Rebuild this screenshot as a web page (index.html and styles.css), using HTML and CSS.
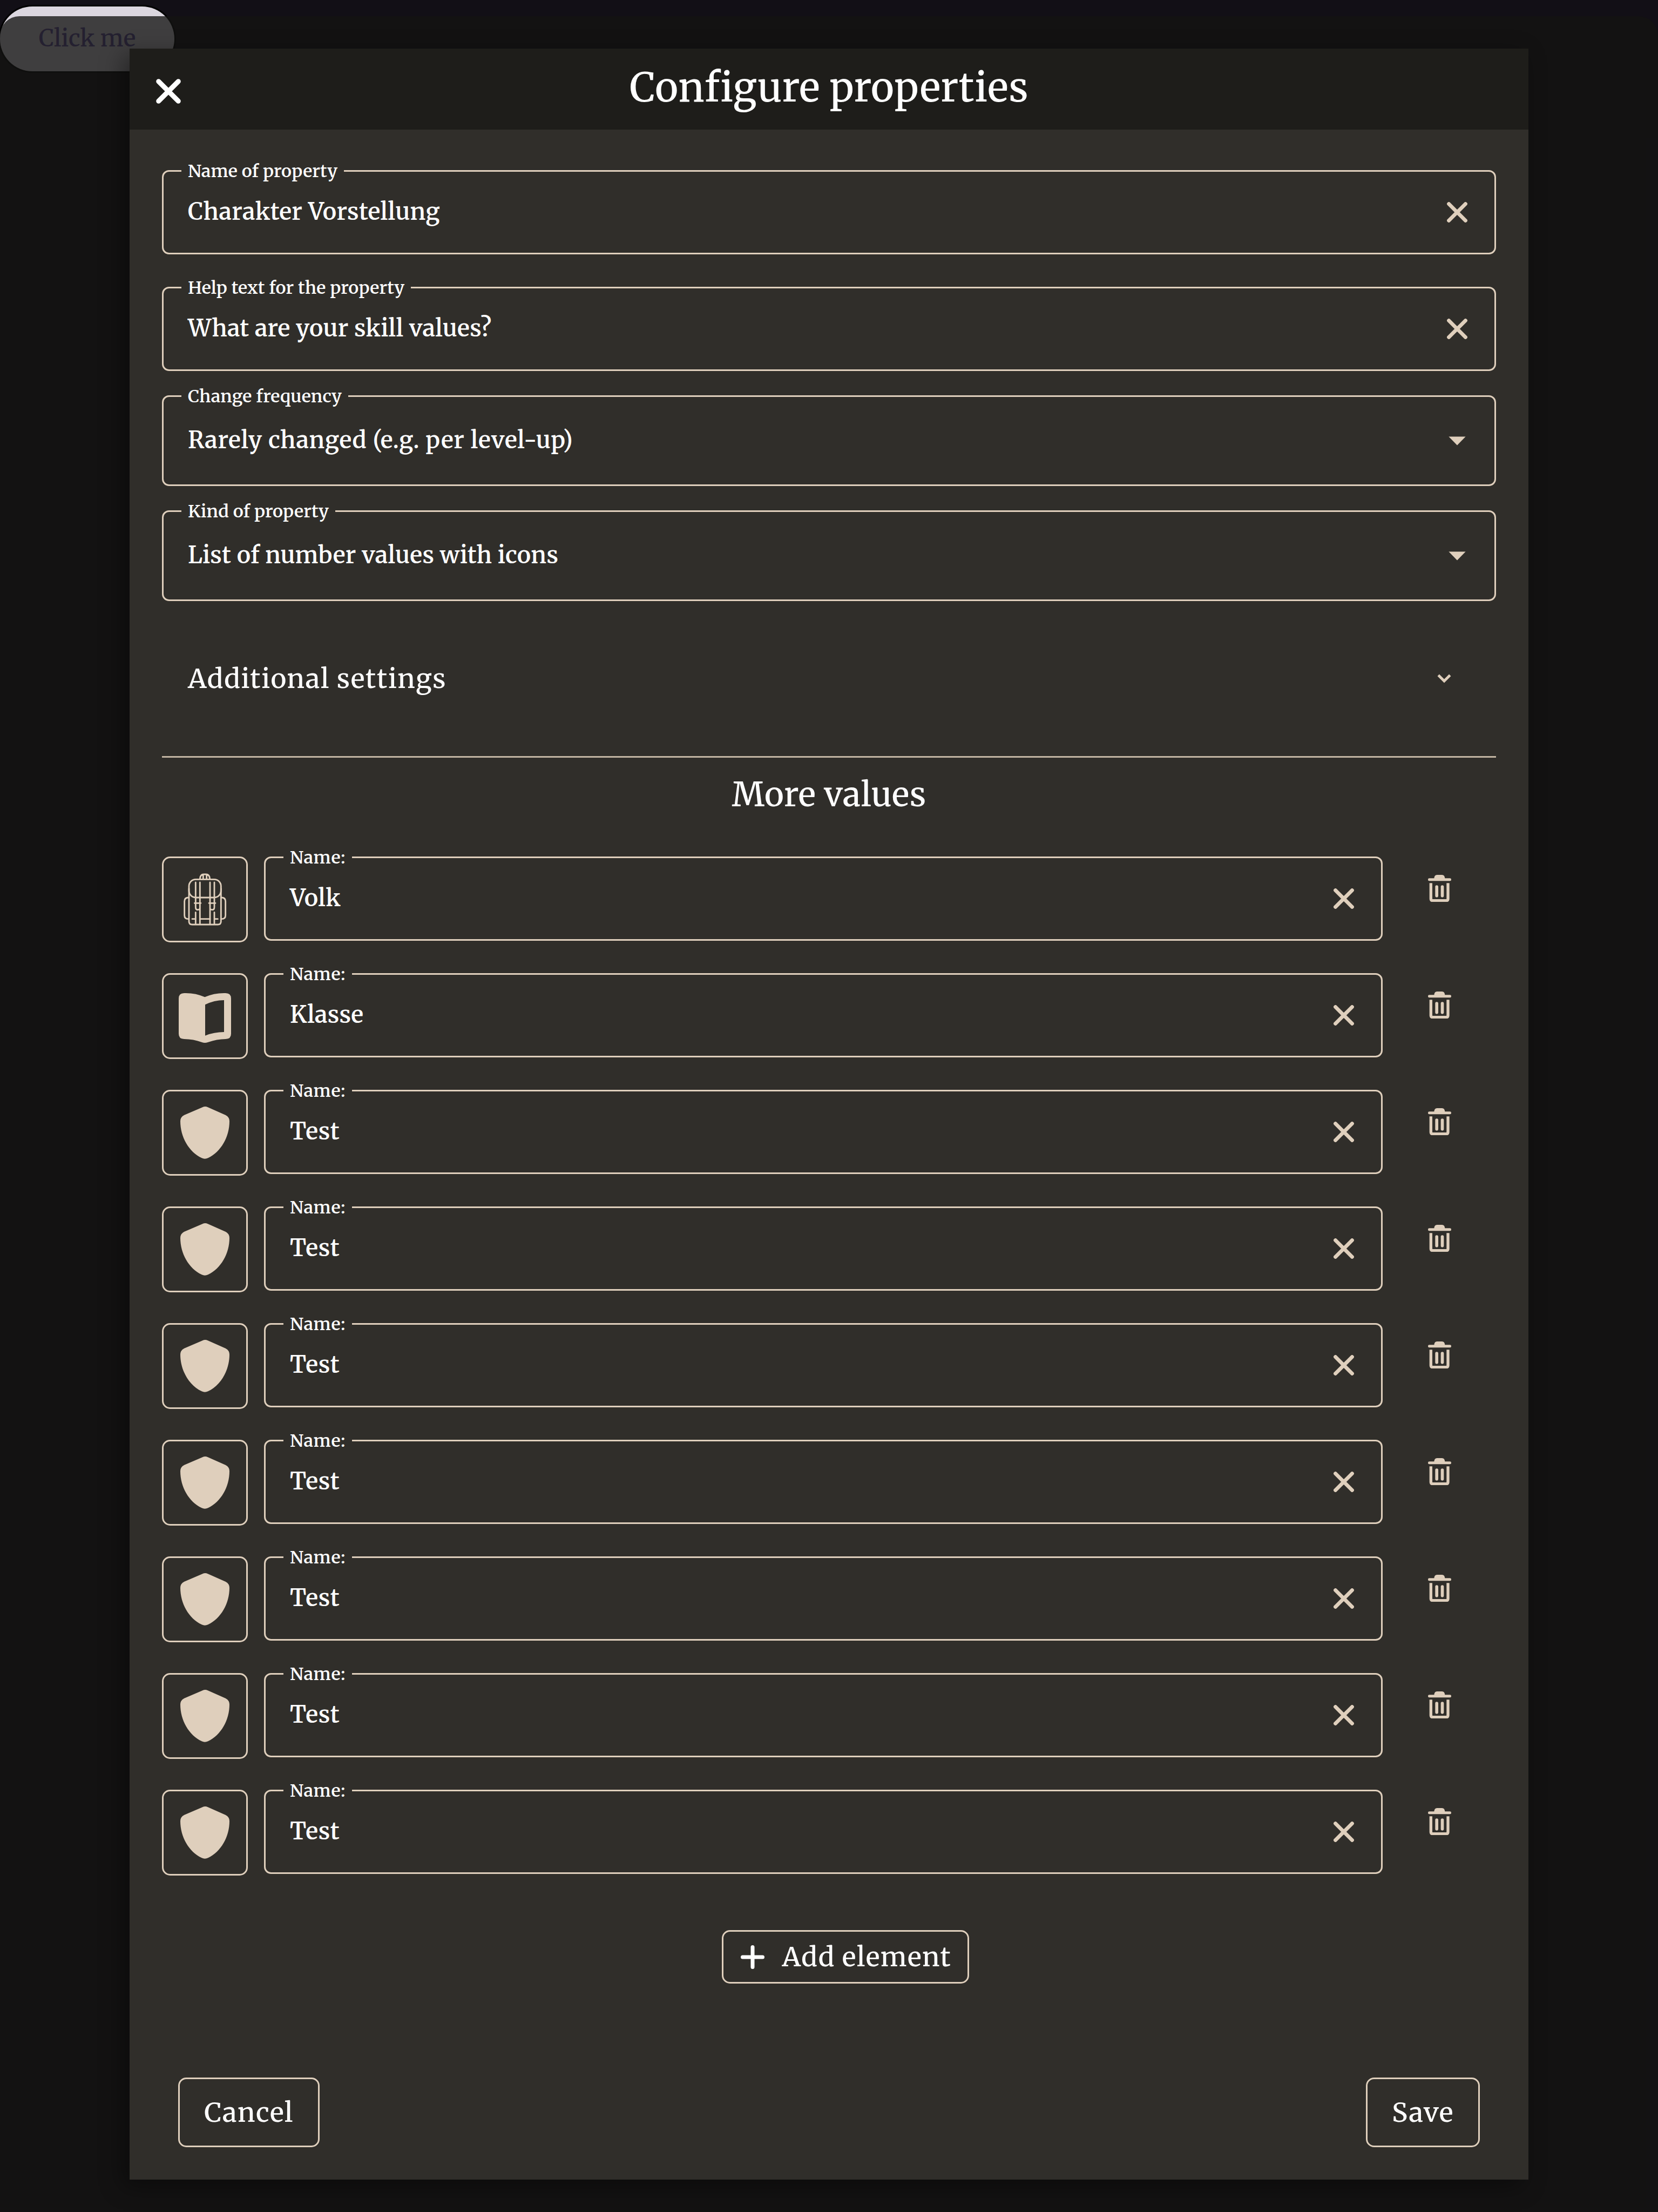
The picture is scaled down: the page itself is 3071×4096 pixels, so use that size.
FILE: index.html
```html
<!DOCTYPE html>
<html lang="en">
<head>
<meta charset="utf-8">
<title>Configure properties</title>
<link rel="stylesheet" href="styles.css">
</head>
<body>
<svg class="defs" aria-hidden="true">
  <symbol id="clear" viewBox="0 0 38 38">
    <path d="M3.6 3.6 34.4 34.4M34.4 3.6 3.6 34.4" fill="none" stroke="currentColor" stroke-width="7" stroke-linecap="round"/>
  </symbol>
  <symbol id="caret" viewBox="0 0 38 38">
    <path d="M3.4 11.5H34.6L19 27.5Z" fill="currentColor"/>
  </symbol>
  <symbol id="trash" viewBox="0 0 129 151">
    <path fill="currentColor" d="M34 19Q36 0 50 0H78Q92 0 94 19H121.500A7.500 7.500 0 0 1 121.500 34H7.500A7.500 7.500 0 0 1 7.500 19Z"/>
    <path fill="none" stroke="currentColor" stroke-width="16" d="M16 46V133Q16 143 26 143H102Q111 143 111 133V46"/>
    <path fill="none" stroke="currentColor" stroke-width="17" stroke-linecap="round" d="M48.500 66.500V116M79.500 66.500V116"/>
  </symbol>
  <symbol id="shield" viewBox="39 126 459 459">
    <path fill="currentColor" d="M252 215Q268 206 285 214L383 257Q405 268 405 292C405 378 358 462 286 496Q268 504 251 496C179 462 132 378 132 292Q132 268 154 257Z"/>
  </symbol>
  <symbol id="book" viewBox="39 738 459 459">
    <path fill="currentColor" fill-rule="evenodd" d="M153 840Q215 838 268 862Q322 838 384 840Q414 840 414 870V1066Q414 1095 384 1095Q335 1095 285 1113Q268 1119 252 1113Q205 1095 153 1095Q123 1095 123 1066V870Q123 840 153 840ZM270 904Q320 879 375 879V1056Q320 1056 270 1076Z"/>
  </symbol>
  <symbol id="backpack" viewBox="39 90 459 459">
    <g fill="none" stroke="currentColor" stroke-width="8.500" stroke-linecap="round">
      <path d="M241 205Q243 180 262 180H275Q294 180 296 205M259 183V205M278 183V205"/>
      <rect x="180" y="208" width="178" height="101" rx="38"/>
      <path d="M180 260V441Q180 459 198 459H340Q358 459 358 441V260"/>
      <path d="M178 309Q155 309 155 330V408Q155 428 176 428M360 309Q383 309 383 330V408Q383 428 362 428"/>
      <path d="M217 225V362Q217 377 229 377Q237 377 241 370M241 225V457M297 225V457M321 225V362Q321 377 309 377Q301 377 297 370"/>
      <path d="M211 340H246M291 340H327M217 391V457M321 391V457M198 428H217M241 428H297M321 428H340"/>
    </g>
  </symbol>
</svg>

<button class="launch">Click me</button>

<div class="scrim">
  <section class="dialog">
    <header class="bar">
      <svg class="close" viewBox="0 0 46 46"><path d="M4.700 4.700 41.300 41.300M41.300 4.700 4.700 41.300" fill="none" stroke="currentColor" stroke-width="9" stroke-linecap="round"/></svg>
      <h1 class="title">Configure properties</h1>
    </header>

    <div class="content">
      <fieldset class="field"><legend>Name of property</legend><span class="value spaced">Charakter Vorstellung</span><svg class="icon"><use href="#clear"/></svg></fieldset>
      <fieldset class="field second"><legend>Help text for the property</legend><span class="value">What are your skill values?</span><svg class="icon"><use href="#clear"/></svg></fieldset>
      <fieldset class="field select"><legend>Change frequency</legend><span class="value wide">Rarely changed (e.g. per level-up)</span><svg class="icon"><use href="#caret"/></svg></fieldset>
      <fieldset class="field select"><legend>Kind of property</legend><span class="value">List of number values with icons</span><svg class="icon"><use href="#caret"/></svg></fieldset>

      <div class="expander">
        <span>Additional settings</span>
        <svg class="chevron" viewBox="0 0 26 17"><path d="M2.200 2.200 13 13 23.800 2.200" fill="none" stroke="currentColor" stroke-width="4.800"/></svg>
      </div>

      <h2 class="subtitle">More values</h2>

      <ul class="rows">
        <li class="row"><span class="pick"><svg><use href="#backpack"/></svg></span><fieldset class="field"><legend>Name:</legend><span class="value spaced">Volk</span><svg class="icon"><use href="#clear"/></svg></fieldset><svg class="delete"><use href="#trash"/></svg></li>
        <li class="row"><span class="pick"><svg><use href="#book"/></svg></span><fieldset class="field"><legend>Name:</legend><span class="value">Klasse</span><svg class="icon"><use href="#clear"/></svg></fieldset><svg class="delete"><use href="#trash"/></svg></li>
        <li class="row"><span class="pick"><svg><use href="#shield"/></svg></span><fieldset class="field"><legend>Name:</legend><span class="value spaced">Test</span><svg class="icon"><use href="#clear"/></svg></fieldset><svg class="delete"><use href="#trash"/></svg></li>
        <li class="row"><span class="pick"><svg><use href="#shield"/></svg></span><fieldset class="field"><legend>Name:</legend><span class="value spaced">Test</span><svg class="icon"><use href="#clear"/></svg></fieldset><svg class="delete"><use href="#trash"/></svg></li>
        <li class="row"><span class="pick"><svg><use href="#shield"/></svg></span><fieldset class="field"><legend>Name:</legend><span class="value spaced">Test</span><svg class="icon"><use href="#clear"/></svg></fieldset><svg class="delete"><use href="#trash"/></svg></li>
        <li class="row"><span class="pick"><svg><use href="#shield"/></svg></span><fieldset class="field"><legend>Name:</legend><span class="value spaced">Test</span><svg class="icon"><use href="#clear"/></svg></fieldset><svg class="delete"><use href="#trash"/></svg></li>
        <li class="row"><span class="pick"><svg><use href="#shield"/></svg></span><fieldset class="field"><legend>Name:</legend><span class="value spaced">Test</span><svg class="icon"><use href="#clear"/></svg></fieldset><svg class="delete"><use href="#trash"/></svg></li>
        <li class="row"><span class="pick"><svg><use href="#shield"/></svg></span><fieldset class="field"><legend>Name:</legend><span class="value spaced">Test</span><svg class="icon"><use href="#clear"/></svg></fieldset><svg class="delete"><use href="#trash"/></svg></li>
        <li class="row"><span class="pick"><svg><use href="#shield"/></svg></span><fieldset class="field"><legend>Name:</legend><span class="value spaced">Test</span><svg class="icon"><use href="#clear"/></svg></fieldset><svg class="delete"><use href="#trash"/></svg></li>
      </ul>

      <div class="add-line">
        <button class="button add"><svg class="plus" viewBox="0 0 44 44"><path d="M3.500 22H40.500M22 3.500V40.500" fill="none" stroke="currentColor" stroke-width="7" stroke-linecap="round"/></svg>Add element</button>
      </div>
    </div>

    <footer class="actions">
      <button class="button cancel">Cancel</button>
      <button class="button save">Save</button>
    </footer>
  </section>
</div>
</body>
</html>
```
FILE: styles.css
```css
:root {
  --line: #dfcfbc;
  --surface: #302e2a;
}

* { box-sizing: border-box; }

body {
  position: relative;
  margin: 0;
  padding-top: 12px;
  width: 3071px;
  height: 4096px;
  overflow: hidden;
  background: #120f16;
  color: #fff;
  font-family: Merriweather, "DejaVu Serif", serif;
  font-size: 43px;
  font-weight: 500;
  line-height: 1.25;
}

.defs { position: absolute; width: 0; height: 0; }

button { font: inherit; color: inherit; cursor: pointer; }

.launch {
  display: block;
  width: 323px;
  height: 120px;
  padding: 0;
  border: 0;
  border-radius: 60px;
  background: #dbd6df;
  box-shadow: 0 0 0 3px #000;
  color: #604f9a;
}

.scrim {
  position: absolute;
  inset: 30px 0 0 0;
  padding: 60px 240px 0;
  border-radius: 36px 36px 0 0;
  background: rgba(19, 19, 18, .78);
}

.dialog {
  display: flex;
  flex-direction: column;
  height: 3946px;
  background: var(--surface);
  box-shadow: -12px 12px 40px rgba(0, 0, 0, .4);
}

.bar {
  display: grid;
  grid-template-columns: 150px 1fr 150px;
  align-items: center;
  height: 150px;
  background: #1e1d1a;
}

.close { width: 46px; height: 46px; margin: 8px 0 0 49px; }

.title {
  margin: 0 0 4px;
  font-size: 73px;
  font-weight: 500;
  letter-spacing: .4px;
  text-align: center;
}

.content { padding: 75px 60px 0; }

.field {
  display: flex;
  align-items: center;
  justify-content: space-between;
  height: 156px;
  min-width: 0;
  margin: 0;
  padding: 0 50px 0 45px;
  border: 3px solid var(--line);
  border-radius: 13px;
}

.field legend {
  height: 3px;
  margin-left: -12px;
  padding: 0 12px;
  font-size: 32.2px;
  font-weight: 560;
  line-height: 3px;
  letter-spacing: .15px;
  white-space: nowrap;
}

.second { margin-top: 60px; }
.select { height: 168px; margin-top: 45px; }

.value { font-weight: 560; letter-spacing: .24px; white-space: nowrap; }
.spaced { letter-spacing: .44px; }
.wide { letter-spacing: .8px; }

.icon { width: 38px; height: 38px; color: var(--line); }

.expander {
  display: flex;
  align-items: center;
  justify-content: space-between;
  height: 290px;
  padding: 0 83px 0 48px;
  border-bottom: 3px solid #c2b4a2;
  font-size: 49px;
  letter-spacing: 1.5px;
}

.chevron { width: 26px; height: 17px; color: var(--line); }

.subtitle {
  margin: 31px 0 77px;
  font-size: 61px;
  font-weight: 500;
  line-height: 75px;
  letter-spacing: .45px;
  text-align: center;
}

.rows {
  display: grid;
  gap: 57px;
  margin: 0;
  padding: 0;
  list-style: none;
}

.row {
  display: grid;
  grid-template-columns: 159px 1fr 210px;
  height: 159px;
}

.row .field { margin-left: 30px; }
.row legend { letter-spacing: .7px; }

.pick {
  border: 3px solid var(--line);
  border-radius: 15px;
  color: var(--line);
}

.pick svg { display: block; width: 153px; height: 153px; }

.delete {
  justify-self: center;
  width: 43px;
  height: 50.3px;
  margin-top: 33.5px;
  color: var(--line);
}

.add-line {
  display: flex;
  justify-content: center;
  margin-top: 101px;
  padding-left: 60px;
}

.button {
  border: 3px solid var(--line);
  border-radius: 15px;
  background: none;
  padding: 0;
  font-size: 49px;
  letter-spacing: 1.5px;
}

.add {
  display: flex;
  align-items: center;
  gap: 33px;
  width: 458px;
  height: 99px;
  padding-left: 32px;
  white-space: nowrap;
}

.plus { flex: none; width: 44px; height: 44px; }

.actions {
  display: flex;
  justify-content: space-between;
  margin-top: auto;
  padding: 0 90px 60px;
}

.cancel { width: 262px; height: 129px; }
.save { width: 211px; height: 129px; }
```
